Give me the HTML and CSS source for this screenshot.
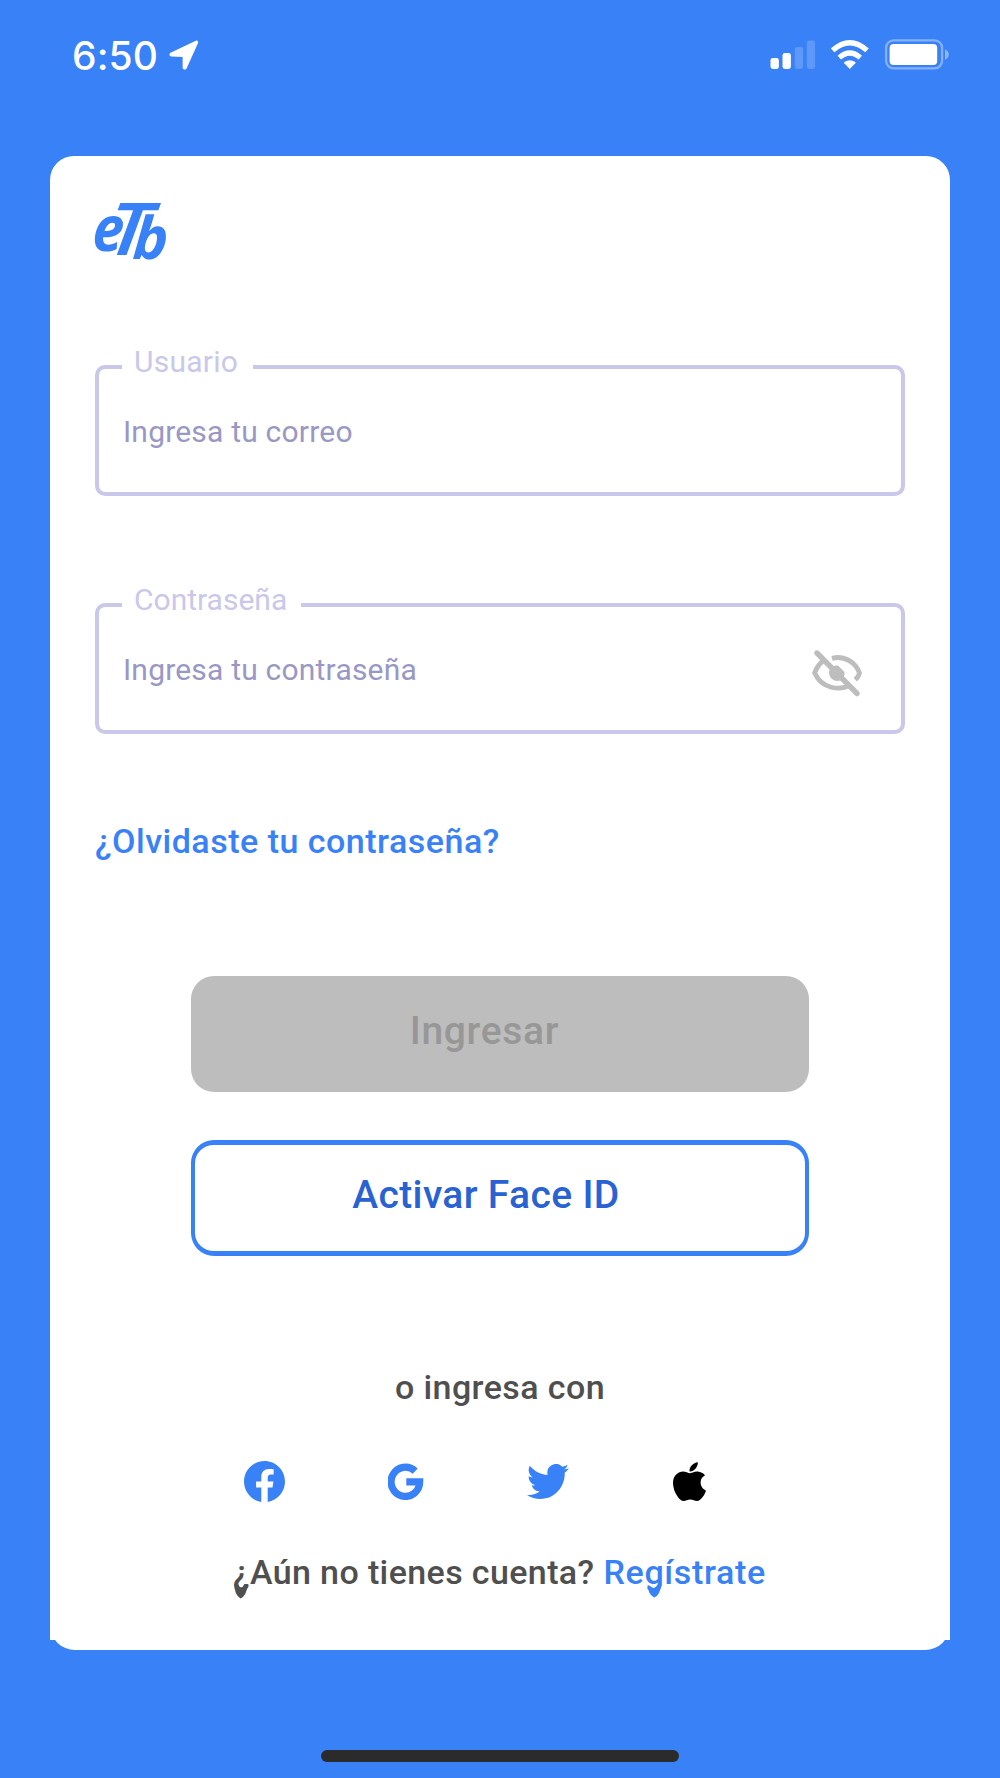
FILE: index.html
```html
<!DOCTYPE html>
<html lang="es">
<head>
<meta charset="utf-8">
<title>eTb – Ingresar</title>
<link rel="stylesheet" href="styles.css">
</head>
<body>
<header class="status">
  <div class="status-left">
    <span class="time">6:50</span>
    <svg class="location" width="32" height="32" viewBox="0 0 32 32"><path d="M2.2 15.200 27.500 3.300 16 28.700 15.300 28.700V16.400L2.200 15.800Z" fill="#fff" stroke="#fff" stroke-width="3.400" stroke-linejoin="round"/></svg>
  </div>
  <svg class="indicators" width="180" height="32" viewBox="770 39 180 32">
    <g fill="#fff">
      <rect x="770.5" y="58" width="8.4" height="11" rx="2.4"/>
      <rect x="782.5" y="53" width="8.4" height="16" rx="2.4"/>
      <rect x="794.7" y="47" width="8.4" height="22" rx="2.4" opacity=".19"/>
      <rect x="806.7" y="40.5" width="8.4" height="28.5" rx="2.4" opacity=".19"/>
      <path d="M849.8 68.9 844.3 63.2Q843.7 62.4 844.6 61.8 849.8 58.6 855 61.8 855.9 62.4 855.3 63.2Z"/>
      <rect x="889.6" y="44" width="47.6" height="21" rx="4"/>
      <path d="M945 49.3Q948.8 51 948.8 54.4T945 59.7Z" opacity=".42"/>
    </g>
    <g fill="none" stroke="#fff" stroke-width="5.2">
      <path d="M839.3 57.6Q849.8 48.5 860.3 57.6"/>
      <path d="M832.6 50.4Q849.8 35 867 50.4"/>
    </g>
    <rect x="886.1" y="40.3" width="56" height="28" rx="7.5" fill="none" stroke="#fff" stroke-opacity=".38" stroke-width="2.3"/>
  </svg>
</header>

<main class="card">
  <svg class="logo" width="76" height="64" viewBox="92 198 76 64" role="img" aria-label="eTb">
    <g class="logo-text">
      <text transform="translate(91.500 250.5) skewX(-4)" font-size="63" textLength="31" lengthAdjust="spacingAndGlyphs">e</text>
      <text class="logo-t" transform="translate(105 254.5) skewX(-7)" font-size="73" textLength="43" lengthAdjust="spacingAndGlyphs">T</text>
      <text transform="translate(132 258.5) skewX(-4)" font-size="59" textLength="35" lengthAdjust="spacingAndGlyphs">b</text>
    </g>
  </svg>

  <form class="form">
    <div class="field">
      <label class="label label-user">Usuario</label>
      <span class="placeholder">Ingresa tu correo</span>
    </div>
    <div class="field">
      <label class="label label-pass">Contraseña</label>
      <span class="placeholder">Ingresa tu contraseña</span>
      <svg class="eye" width="56" height="52" viewBox="809 647 56 52">
        <g fill="none" stroke="#bdbdbd" stroke-width="4.8">
          <path d="M823.4 660.8Q817.5 665 814.7 672.9C822 689 840 691 850 685"/>
          <path d="M832 658.3C845 655 856 663 859.5 673.2Q858.5 677 855.3 679.8"/>
        </g>
        <path d="M831.5 667A8.200 8.200 0 1 0 843 678.700Z" fill="#bdbdbd"/>
        <path d="M831 667 843 679 Q845 675 844.500 672L838 665.500Q834 665 831 667Z" fill="#bdbdbd"/>
        <path d="M817 653 857 693.5" stroke="#bdbdbd" stroke-width="5.4" stroke-linecap="round"/>
      </svg>
    </div>
    <a class="forgot">¿Olvidaste tu contraseña?</a>
    <div class="button login"><span>Ingresar</span></div>
    <div class="button face"><span>Activar Face ID</span></div>
  </form>

  <p class="or"><span>o ingresa con</span></p>
  <nav class="social">
    <svg width="41" height="41" viewBox="0 0 24 24"><path fill="#3981f7" d="M24 12.07C24 5.4 18.63 0 12 0S0 5.4 0 12.07C0 18.1 4.39 23.1 10.13 24v-8.44H7.08v-3.49h3.05V9.41c0-3.02 1.79-4.69 4.53-4.69 1.31 0 2.69.24 2.69.24v2.97h-1.52c-1.49 0-1.95.93-1.95 1.88v2.26h3.32l-.53 3.49h-2.79V24C19.61 23.1 24 18.1 24 12.07Z"/></svg>
    <svg width="36" height="37" viewBox="0 0 36 37"><path fill="none" stroke="#3981f7" stroke-width="7.2" d="M27.200 8.200A14.3 14.6 0 1 0 31.7 18.800H18.3"/></svg>
    <svg width="42" height="35" viewBox="0 2.2 24 19.6" preserveAspectRatio="none"><path fill="#3981f7" d="M23.95 4.57a10 10 0 0 1-2.82.77 4.96 4.96 0 0 0 2.16-2.72c-.95.55-2 .95-3.12 1.18a4.92 4.92 0 0 0-8.39 4.48C7.69 8.1 4.07 6.13 1.64 3.16a4.92 4.92 0 0 0 1.52 6.57 4.9 4.9 0 0 1-2.23-.61v.06c0 2.38 1.7 4.37 3.95 4.82a5 5 0 0 1-2.21.09 4.94 4.94 0 0 0 4.6 3.42A9.87 9.87 0 0 1 0 19.54a14 14 0 0 0 7.55 2.21c9.05 0 14-7.5 14-13.98 0-.21 0-.42-.02-.63a9.9 9.9 0 0 0 2.42-2.57Z"/></svg>
    <svg width="33" height="39" viewBox="4 30 376 450" preserveAspectRatio="none"><path d="M318.7 268.7c-.2-36.7 16.4-64.4 50-84.8-18.8-26.9-47.2-41.7-84.7-44.6-35.5-2.8-74.3 20.7-88.5 20.7-15 0-49.4-19.7-76.4-19.7C63.3 141.2 4 184.8 4 273.5q0 39.3 14.4 81.2c12.8 36.7 59 126.7 107.2 125.2 25.2-.6 43-17.9 75.8-17.9 31.8 0 48.3 17.9 76.4 17.9 48.6-.7 90.4-82.5 102.6-119.3-65.2-30.700-61.700-90-61.700-91.900zm-56.600-164.200c27.300-32.400 24.800-61.900 24-72.500-24.100 1.400-52 16.400-67.900 34.900-17.500 19.800-27.800 44.300-25.600 71.900 26.100 2 49.900-11.400 69.500-34.300z"/></svg>
  </nav>
  <p class="signup"><span>¿Aún no tienes cuenta?</span><a class="register">Regístrate</a>
    <svg class="tails" width="440" height="26" viewBox="232 1580 440 26">
      <path d="M234.2 1585Q234.500 1596 240.500 1599.500 246.500 1597 248 1585L244.500 1585Q241 1592 238 1585Z" fill="#4f4f4f"/>
      <path d="M647.5 1586Q648 1595 654 1598.5 660 1597 661.5 1585L658 1585Q654 1592 650 1587Z" fill="#3981f7"/>
    </svg>
  </p>
</main>
<div class="home-bar"></div>
</body>
</html>
```
FILE: styles.css
```css
* { box-sizing: border-box; }

body {
  margin: 0;
  width: 1000px;
  height: 1778px;
  overflow: hidden;
  display: flex;
  flex-direction: column;
  background: #3981f7;
  font-family: Roboto, "Liberation Sans", sans-serif;
}

.status {
  height: 156px;
  padding: 39px 50px 0 72px;
  display: flex;
  justify-content: space-between;
  align-items: flex-start;
}

.status-left { display: flex; gap: 10px; height: 32px; align-items: center; }

.time {
  width: 87px;
  font: 500 39px/33px Inter, sans-serif;
  letter-spacing: 0.1px;
  color: #fff;
  white-space: nowrap;
}

.card {
  position: relative;
  width: 900px;
  height: 1484px;
  margin: 0 auto;
  padding: 42px 45px 0;
  background: #fff;
  border-radius: 24px 24px 0 0;
}

.card::after {
  content: "";
  position: absolute;
  left: 0;
  right: 0;
  bottom: -9.5px;
  height: 50px;
  background: #fff;
  border-radius: 0 0 25px 25px;
  z-index: 0;
}

.logo { display: block; margin-left: -3px; overflow: visible; }

.logo-text {
  fill: #3981f7;
  font-family: "Open Sans", sans-serif;
  font-weight: 700;
  font-style: italic;
}

.logo-t { font-weight: 600; }

.form { display: flex; flex-direction: column; padding-top: 103px; }

.field {
  position: relative;
  height: 131px;
  margin-bottom: 107px;
  padding: 0 36px 0 24px;
  border: 4px solid #c9c8ea;
  border-radius: 10px;
  display: flex;
  align-items: center;
  justify-content: space-between;
}

.label {
  position: absolute;
  top: -25px;
  left: 23px;
  height: 36px;
  padding-left: 12px;
  background: #fff;
  color: #c9c8ea;
  font-size: 30px;
  line-height: 35px;
  white-space: nowrap;
}

.label-user { width: 131px; letter-spacing: 0.25px; }
.label-pass { width: 179px; }

.placeholder {
  padding-top: 3px;
  color: #9998c5;
  font-size: 30px;
  line-height: 36px;
  letter-spacing: 0.2px;
}

.eye { margin-top: 8px; }

.forgot {
  margin-top: -22px;
  height: 44px;
  color: #3981f7;
  font-size: 34px;
  font-weight: 500;
  line-height: 44px;
  letter-spacing: 0.5px;
  white-space: nowrap;
}

.button {
  width: 618px;
  height: 116px;
  margin: 0 auto;
  padding: 32px 31px 0 0;
  border-radius: 23px;
  text-align: center;
  font-size: 39px;
  line-height: 46px;
  font-weight: 500;
  letter-spacing: 0.7px;
}

.login { margin-top: 113px; background: #bdbdbd; color: #979797; }
.face {
  margin-top: 48px;
  padding: 27px 28px 0 0;
  border: 4px solid #3981f7;
  border-width: 5px 4px;
  color: #2962d3;
  letter-spacing: 0.35px;
}

.or {
  margin: 109px 0 0;
  text-align: center;
  font-size: 34px;
  line-height: 44px;
  font-weight: 500;
  letter-spacing: 0.4px;
  color: #4f4f4f;
}

.social {
  display: grid;
  grid-template-columns: repeat(4, 141.5px);
  justify-items: center;
  align-items: center;
  height: 42px;
  margin-top: 51px;
  padding-left: 99px;
}

.signup {
  position: relative;
  z-index: 1;
  display: flex;
  gap: 9px;
  margin: 48px 0 0 138px;
  font-size: 34px;
  line-height: 44px;
  font-weight: 500;
  letter-spacing: 0.38px;
  color: #4f4f4f;
  white-space: nowrap;
}

.register { color: #3981f7; letter-spacing: 0.65px; }
.tails { position: absolute; left: -1px; top: 29px; }

.home-bar {
  width: 358px;
  height: 12px;
  margin: 110px auto 0;
  border-radius: 6px;
  background: #2b2b2b;
}
```
